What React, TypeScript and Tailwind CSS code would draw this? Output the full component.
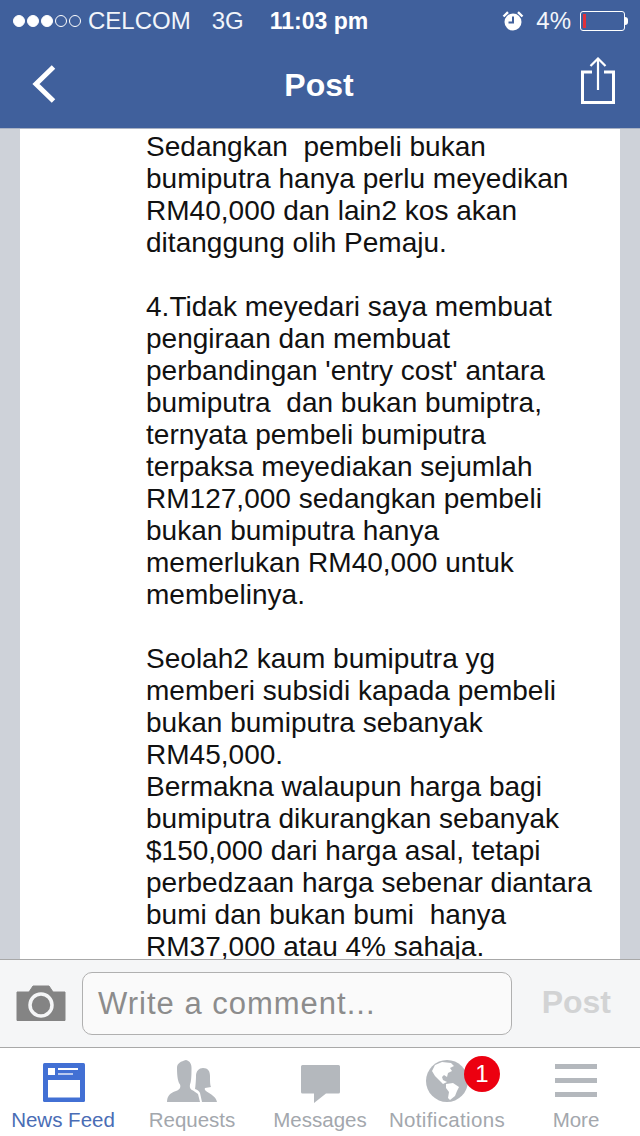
const lines = [
  "Sedangkan  pembeli bukan",
  "bumiputra hanya perlu meyedikan",
  "RM40,000 dan lain2 kos akan",
  "ditanggung olih Pemaju.",
  "",
  "4.Tidak meyedari saya membuat",
  "pengiraan dan membuat",
  "perbandingan 'entry cost' antara",
  "bumiputra  dan bukan bumiptra,",
  "ternyata pembeli bumiputra",
  "terpaksa meyediakan sejumlah",
  "RM127,000 sedangkan pembeli",
  "bukan bumiputra hanya",
  "memerlukan RM40,000 untuk",
  "membelinya.",
  "",
  "Seolah2 kaum bumiputra yg",
  "memberi subsidi kapada pembeli",
  "bukan bumiputra sebanyak",
  "RM45,000.",
  "Bermakna walaupun harga bagi",
  "bumiputra dikurangkan sebanyak",
  "$150,000 dari harga asal, tetapi",
  "perbedzaan harga sebenar diantara",
  "bumi dan bukan bumi  hanya",
  "RM37,000 atau 4% sahaja.",
];

function Tab({ label, labelClass, children }: { label: string; labelClass: string; children: React.ReactNode }) {
  return (
    <div className="flex flex-col items-center">
      <div className="h-[54px] flex items-end justify-center">{children}</div>
      <span className={`text-[20.5px] leading-[24px] mt-[6px] whitespace-nowrap ${labelClass}`}>{label}</span>
    </div>
  );
}

export default function App() {
  return (
    <div className="w-[640px] h-[1136px] flex flex-col overflow-hidden bg-white font-['Liberation_Sans',Arial,sans-serif]">
      <header className="h-[129px] shrink-0 bg-[#40609c] border-b border-[#a9b2c4] text-white flex flex-col">
        <div className="h-[42px] flex items-center pl-[13px] pr-[12px] text-[24px] font-light text-[#f2f5fa]">
          <div className="flex items-center gap-[2px]">
            {[1, 1, 1, 0, 0].map((on, i) => (
              <span key={i} className={`w-[12px] h-[12px] rounded-full border border-white ${on ? "bg-white" : ""}`} />
            ))}
          </div>
          <span className="ml-[7px]">CELCOM</span>
          <span className="ml-[21px]">3G</span>
          <span className="ml-[26px] text-[23px] font-bold text-white">11:03 pm</span>
          <div className="ml-auto flex items-center">
            <svg width="22" height="22" viewBox="0 0 22 22">
              <circle cx="11" cy="12" r="8.5" fill="#fff" />
              <path d="M11 6.5V12.5H6.5" stroke="#40609c" strokeWidth="2" fill="none" />
              <path d="M1.5 6.5L6 2.2 M20.5 6.5L16 2.2" stroke="#fff" strokeWidth="2.4" />
            </svg>
            <span className="ml-[12px]">4%</span>
            <div className="ml-[9px] flex items-center">
              <div className="w-[45px] h-[20px] rounded-[3px] border border-white p-[2px]">
                <div className="w-[3px] h-full bg-[#e0303a]" />
              </div>
              <div className="w-[3px] h-[8px] bg-white rounded-r-sm" />
            </div>
          </div>
        </div>
        <div className="flex-1 flex items-center justify-between pl-[31px] pr-[25px] pb-[2px]">
          <svg width="26" height="40" viewBox="0 0 26 40">
            <path d="M22.5 3L5 20l17.5 17" stroke="#fff" strokeWidth="5" fill="none" />
          </svg>
          <span className="text-[32px] font-bold leading-none translate-y-[1px]">Post</span>
          <svg width="34" height="48" viewBox="0 0 34 48" className="-translate-y-[3px]">
            <path d="M11 15H1.5V45.5H32.5V15H23" stroke="#fff" strokeWidth="3" fill="none" />
            <path d="M17 33V2 M9.5 9L17 1.5l7.5 7.5" stroke="#fff" strokeWidth="2.2" fill="none" />
          </svg>
        </div>
      </header>

      <main className="flex-1 min-h-0 bg-[#ced2d9] px-[20px] overflow-hidden">
        <div className="h-full bg-white pl-[126px] pt-[2px] overflow-hidden text-[28px] leading-[32px] tracking-[0.02px] text-[#111] whitespace-pre">
          {lines.map((l, i) => (
            <div key={i} className="h-[32px]">{l}</div>
          ))}
        </div>
      </main>

      <section className="h-[89px] shrink-0 bg-[#f5f6f7] border-y border-[#a8a8a8] flex items-center pl-[16px] pr-[29px]">
        <svg width="50" height="37" viewBox="0 0 50 37">
          <path d="M1 7H13L17 1H33L37 7H49V35.5H1Z" fill="#848484" strokeLinejoin="round" stroke="#848484" />
          <circle cx="25" cy="20" r="11" fill="#848484" stroke="#f5f6f7" strokeWidth="3.5" />
        </svg>
        <div className="ml-[16px] w-[430px] h-[63px] rounded-[10px] border border-[#b0b0b0] bg-[#fafafa] flex items-center pl-[15px] pt-[2px] text-[31px] tracking-[1px] text-[#8c8c8c]">
          Write a comment...
        </div>
        <span className="ml-auto text-[32px] font-bold text-[#d2d3d4] -translate-y-[2px]">Post</span>
      </section>

      <nav className="h-[88px] shrink-0 bg-white grid grid-cols-5 relative">
        <Tab label="News Feed" labelClass="text-[#4a6db5] -translate-x-[1px]">
          <svg width="42" height="39" viewBox="0 0 42 39">
            <rect width="42" height="39" rx="1.5" fill="#4270d4" />
            <rect x="5" y="17" width="32" height="17.5" fill="#fff" />
            <rect x="5" y="5" width="7" height="7" fill="#fff" />
            <rect x="15" y="5" width="20" height="2" fill="#fff" />
            <rect x="15" y="10" width="15" height="2" fill="#b9c9ee" />
          </svg>
        </Tab>
        <Tab label="Requests" labelClass="text-[#a3a7ad]">
          <svg width="50" height="42" viewBox="0 0 50 42">
            <path d="M0 42C0 36 3 33 9 31C13 29.5 14 27 13 24.5C11 22 10 17 10 8C10 3 14 1.5 19 0C23 1 25 4 24.5 10C24.5 17 24 22 23 24.5C22.5 27 23 29.5 26 30.5L31 34L33 42Z" fill="#b4b8bd" />
            <path d="M35 42L33 33C32 31 31 30 28 29C28.5 27 29 20 29 16C29 11 32 8 36 8C41 8 43 11 43 16C43 20 43 25 44 27L38 28C37 30 39 31 42 33C45 35 49 37 50 42Z" fill="#b4b8bd" />
          </svg>
        </Tab>
        <Tab label="Messages" labelClass="text-[#a3a7ad]">
          <svg width="39" height="38" viewBox="0 0 39 38" className="-mb-[1px]">
            <path d="M1.5 0H37.5A1.5 1.5 0 0 1 39 1.5V27A1.5 1.5 0 0 1 37.5 28.5H25L13 38V28.5H1.5A1.5 1.5 0 0 1 0 27V1.5A1.5 1.5 0 0 1 1.5 0Z" fill="#b4b8bd" />
          </svg>
        </Tab>
        <Tab label="Notifications" labelClass="text-[#a3a7ad] tracking-[0.35px] -translate-x-[1px]">
          <svg width="42" height="42" viewBox="0 0 42 42" className="-translate-x-[1px]">
            <circle cx="21" cy="21" r="21" fill="#b4b8bd" />
            <path d="M9 5L16 2L25 3L28 6L24 8L26 11L22 13L21 17L18 15L16 17L17 20L21 22L17 24L13 20L9 16L6 11Z" fill="#fff" />
            <path d="M20 24L27 23L33 27L31 31L29 36L24 40L22 38L23 32L20 28Z" fill="#fff" />
          </svg>
        </Tab>
        <Tab label="More" labelClass="text-[#a3a7ad]">
          <svg width="42" height="33" viewBox="0 0 42 33" className="mb-[5px]">
            <rect y="0" width="42" height="5" fill="#b4b8bd" />
            <rect y="14" width="42" height="5" fill="#b4b8bd" />
            <rect y="28" width="42" height="5" fill="#b4b8bd" />
          </svg>
        </Tab>
        <span className="absolute left-[464px] top-[8px] w-[36px] h-[36px] rounded-full bg-[#ec0010] text-white text-[24px] flex items-center justify-center">1</span>
      </nav>
    </div>
  );
}
